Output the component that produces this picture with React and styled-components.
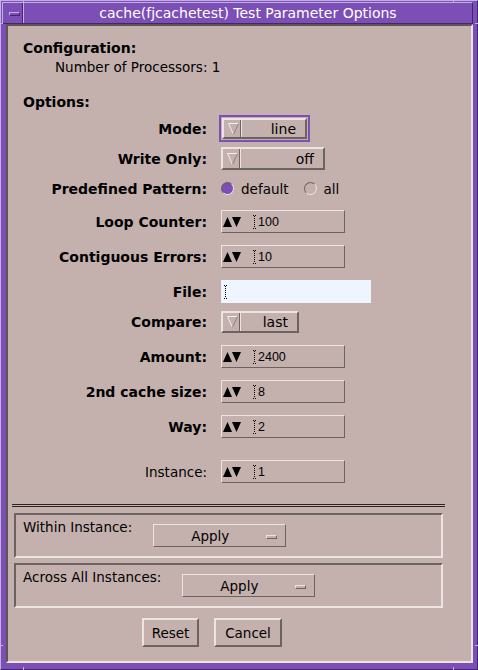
import React from 'react';
import styled, { createGlobalStyle } from 'styled-components';

const colors = {
  bg: '#c4b1ae',
  light: '#ece4e2',
  dark: '#6c6260',
  purple: '#7c4fb6',
  purpleLight: '#c4b0e2',
  purpleDark: '#44266f',
  field: '#eef5ff',
};

const GlobalStyle = createGlobalStyle`
  body {
    margin: 0;
    background: #ffffff;
  }
`;

const Window = styled.div`
  position: relative;
  width: 478px;
  height: 670px;
  box-sizing: border-box;
  background: ${colors.purple};
  border: 1px solid;
  border-color: ${colors.purpleLight} ${colors.purpleDark} ${colors.purpleDark} ${colors.purpleLight};
  padding: 1px 4px 6px 1px;
  display: flex;
  flex-direction: column;
  font-family: "DejaVu Sans", "Liberation Sans", sans-serif;
  color: #000;
`;

const Tick = styled.span`
  position: absolute;
  left: ${p => p.$x}px;
  top: ${p => p.$y}px;
  width: ${p => p.$w}px;
  height: ${p => p.$h}px;
  background: ${colors.purpleLight};
`;

const TitleBar = styled.div`
  height: 22px;
  box-sizing: border-box;
  display: flex;
  border: 1px solid;
  border-color: ${colors.purpleLight} ${colors.purpleDark} ${colors.purpleDark} ${colors.purpleLight};
`;

const MenuBox = styled.div`
  width: 20px;
  display: flex;
  align-items: center;
  padding-left: 6px;
  box-sizing: border-box;
  border-right: 1px solid ${colors.purpleDark};
`;

const MenuBar = styled.span`
  width: 11px;
  height: 4px;
  box-sizing: border-box;
  margin-top: 2px;
  border: 1px solid;
  border-color: ${colors.purpleLight} ${colors.purpleDark} ${colors.purpleDark} ${colors.purpleLight};
`;

const TitleText = styled.div`
  flex: 1;
  border-left: 1px solid ${colors.purpleLight};
  display: flex;
  align-items: center;
  justify-content: center;
  color: #ffffff;
  font-size: 14px;
  white-space: nowrap;
`;

const Body = styled.div`
  flex: 1;
  margin-left: 4px;
  background: ${colors.bg};
  border: 2px solid;
  border-color: #5e5553 ${colors.light} ${colors.light} #5e5553;
  display: flex;
  flex-direction: column;
`;

const Content = styled.div`
  padding: 14px 0 0 15px;
  display: flex;
  flex-direction: column;
`;

const Heading = styled.div`
  font-size: 14px;
  font-weight: bold;
  line-height: 16px;
  margin-top: ${p => p.$mt || 0}px;
`;

const Info = styled.div`
  font-size: 13.5px;
  line-height: 15px;
  margin-top: 4px;
  padding-left: 32px;
`;

const Row = styled.div`
  display: grid;
  grid-template-columns: 184px auto;
  column-gap: 14px;
  align-items: center;
  height: ${p => p.$h || 23}px;
  margin-top: ${p => p.$mt}px;
`;

const Label = styled.div`
  text-align: right;
  white-space: nowrap;
  font-size: ${p => (p.$regular ? '13.5px' : '14px')};
  font-weight: ${p => (p.$regular ? 'normal' : 'bold')};
`;

const OptionMenu = styled.div`
  width: ${p => p.$w}px;
  height: ${p => p.$h}px;
  box-sizing: border-box;
  border: 2px solid;
  border-color: ${colors.light} ${colors.dark} ${colors.dark} ${colors.light};
  display: flex;
  align-items: center;
  padding: 0 9px 0 2px;
  margin-left: ${p => (p.$focus ? 1 : 0)}px;
  outline: ${p => (p.$focus ? `2px solid ${colors.purple}` : 'none')};
  outline-offset: 1px;
  font-size: 14px;
`;

const Divider = styled.span`
  align-self: stretch;
  width: 2px;
  box-sizing: border-box;
  margin-left: 1px;
  border-left: 1px solid ${colors.dark};
  border-right: 1px solid ${colors.light};
`;

const OptionValue = styled.span`
  flex: 1;
  text-align: right;
`;

const RadioGroup = styled.div`
  display: flex;
  align-items: center;
  gap: 15px;
  font-size: 13.5px;
`;

const RadioItem = styled.label`
  display: flex;
  align-items: center;
  gap: 7px;
`;

const RadioCircle = styled.span`
  width: 13px;
  height: 13px;
  box-sizing: border-box;
  border-radius: 50%;
  border: 1px solid;
  border-color: ${colors.dark} ${colors.light} ${colors.light} ${colors.dark};
  background: ${p => (p.$on ? colors.purple : 'transparent')};
`;

const SpinBox = styled.div`
  width: 124px;
  height: 23px;
  box-sizing: border-box;
  border: 1px solid;
  border-color: ${colors.light} ${colors.dark} ${colors.dark} ${colors.light};
  display: flex;
  align-items: center;
  padding-left: 1px;
  font-family: "Liberation Sans", "DejaVu Sans", sans-serif;
  font-size: 12.5px;
`;

const SpinValue = styled.span`
  margin-left: 1px;
`;

const TextField = styled.div`
  width: 150px;
  height: 23px;
  background: ${colors.field};
  display: flex;
  align-items: center;
  padding-left: 3px;
  box-sizing: border-box;
`;

const Separator = styled.div`
  width: 433px;
  height: 3px;
  box-sizing: border-box;
  margin: 21px 0 0 4px;
  border-top: 1px solid #2e2626;
  border-bottom: 1px solid #2e2626;
`;

const Group = styled.div`
  width: 429px;
  height: 45px;
  box-sizing: border-box;
  margin: ${p => p.$mt}px 0 0 6px;
  border: 2px solid;
  border-color: ${colors.dark} ${colors.light} ${colors.light} ${colors.dark};
  padding: 5px 0 0 7px;
  display: flex;
  align-items: flex-start;
  gap: 21px;
  font-size: 13.5px;
`;

const GroupLabel = styled.span`
  line-height: 15px;
  white-space: nowrap;
`;

const ApplyButton = styled.div`
  width: 133px;
  height: 23px;
  box-sizing: border-box;
  margin-top: 4px;
  border: 1px solid;
  border-color: ${colors.light} ${colors.dark} ${colors.dark} ${colors.light};
  display: flex;
  align-items: center;
`;

const ApplyText = styled.span`
  flex: 1;
  text-align: center;
`;

const Indicator = styled.span`
  width: 11px;
  height: 4px;
  box-sizing: border-box;
  margin: 2px 8px 0 0;
  border: 1px solid;
  border-color: ${colors.light} ${colors.dark} ${colors.dark} ${colors.light};
`;

const ButtonRow = styled.div`
  display: flex;
  gap: 15px;
  margin-top: 10px;
  padding-left: 134px;
`;

const PushButton = styled.div`
  width: ${p => p.$w}px;
  height: 29px;
  box-sizing: border-box;
  border: 2px solid;
  border-color: ${colors.light} ${colors.dark} ${colors.dark} ${colors.light};
  display: flex;
  align-items: center;
  justify-content: center;
  font-size: 13.5px;
`;

const DownTriangle = () => (
  <svg width="11" height="12" viewBox="0 0 11 12" style={{ marginLeft: 2 }}>
    <path d="M0.5 0.5H10.5" stroke="#f4eeed" fill="none" />
    <path d="M0.5 0.5L5.5 11.5" stroke="#f4eeed" fill="none" />
    <path d="M10.5 0.5L5.5 11.5" stroke="#8c8280" fill="none" />
  </svg>
);

const SpinArrows = () => (
  <svg width="18" height="10" viewBox="0 0 18 10">
    <polygon points="0,10 4.5,0 9,10" fill="#000" />
    <polygon points="9,0 18,0 13.5,10" fill="#000" />
  </svg>
);

const Caret = ({ gap }) => (
  <svg width="4" height="14" viewBox="0 0 4 14" shapeRendering="crispEdges" style={{ marginLeft: gap }}>
    <rect x="0" y="0" width="1" height="1" fill="#000" />
    <rect x="2" y="0" width="1" height="1" fill="#000" />
    <rect x="0" y="13" width="1" height="1" fill="#000" />
    <rect x="2" y="13" width="1" height="1" fill="#000" />
    {[1, 3, 5, 7, 9, 11].map(y => (
      <rect key={y} x="1" y={y} width="1" height="1" fill="#000" />
    ))}
  </svg>
);

const Spin = ({ value }) => (
  <SpinBox>
    <SpinArrows />
    <Caret gap={12} />
    <SpinValue>{value}</SpinValue>
  </SpinBox>
);

const Option = ({ value, w, h, focus }) => (
  <OptionMenu $w={w} $h={h} $focus={focus}>
    <DownTriangle />
    <Divider />
    <OptionValue>{value}</OptionValue>
  </OptionMenu>
);

const ticks = [
  { x: 22, y: -1, w: 1, h: 3 },
  { x: 452, y: -1, w: 1, h: 3 },
  { x: 22, y: 666, w: 1, h: 3 },
  { x: 452, y: 666, w: 1, h: 3 },
  { x: -1, y: 22, w: 3, h: 1 },
  { x: -1, y: 644, w: 3, h: 1 },
  { x: 474, y: 22, w: 3, h: 1 },
  { x: 474, y: 644, w: 3, h: 1 },
];

export default function App() {
  return (
    <>
      <GlobalStyle />
      <Window>
        {ticks.map((t, i) => (
          <Tick key={i} $x={t.x} $y={t.y} $w={t.w} $h={t.h} />
        ))}
        <TitleBar>
          <MenuBox>
            <MenuBar />
          </MenuBox>
          <TitleText>cache(fjcachetest) Test Parameter Options</TitleText>
        </TitleBar>
        <Body>
          <Content>
            <Heading>Configuration:</Heading>
            <Info>Number of Processors: 1</Info>
            <Heading $mt={19}>Options:</Heading>

            <Row $h={27} $mt={5}>
              <Label>Mode:</Label>
              <div>
                <Option value="line" w={85} h={21} focus />
              </div>
            </Row>
            <Row $mt={5}>
              <Label>Write Only:</Label>
              <div>
                <Option value="off" w={104} h={23} />
              </div>
            </Row>
            <Row $mt={7}>
              <Label>Predefined Pattern:</Label>
              <RadioGroup>
                <RadioItem>
                  <RadioCircle $on />
                  default
                </RadioItem>
                <RadioItem>
                  <RadioCircle />
                  all
                </RadioItem>
              </RadioGroup>
            </Row>
            <Row $mt={10}>
              <Label>Loop Counter:</Label>
              <Spin value="100" />
            </Row>
            <Row $mt={12}>
              <Label>Contiguous Errors:</Label>
              <Spin value="10" />
            </Row>
            <Row $mt={12}>
              <Label>File:</Label>
              <TextField>
                <Caret gap={0} />
              </TextField>
            </Row>
            <Row $h={22} $mt={8}>
              <Label>Compare:</Label>
              <div>
                <Option value="last" w={78} h={22} />
              </div>
            </Row>
            <Row $mt={12}>
              <Label>Amount:</Label>
              <Spin value="2400" />
            </Row>
            <Row $mt={12}>
              <Label>2nd cache size:</Label>
              <Spin value="8" />
            </Row>
            <Row $mt={12}>
              <Label>Way:</Label>
              <Spin value="2" />
            </Row>
            <Row $mt={22}>
              <Label $regular>Instance:</Label>
              <Spin value="1" />
            </Row>
          </Content>

          <Separator />

          <Group $mt={6}>
            <GroupLabel>Within Instance:</GroupLabel>
            <ApplyButton>
              <ApplyText>Apply</ApplyText>
              <Indicator />
            </ApplyButton>
          </Group>
          <Group $mt={5}>
            <GroupLabel>Across All Instances:</GroupLabel>
            <ApplyButton>
              <ApplyText>Apply</ApplyText>
              <Indicator />
            </ApplyButton>
          </Group>

          <ButtonRow>
            <PushButton $w={57}>Reset</PushButton>
            <PushButton $w={68}>Cancel</PushButton>
          </ButtonRow>
        </Body>
      </Window>
    </>
  );
}
